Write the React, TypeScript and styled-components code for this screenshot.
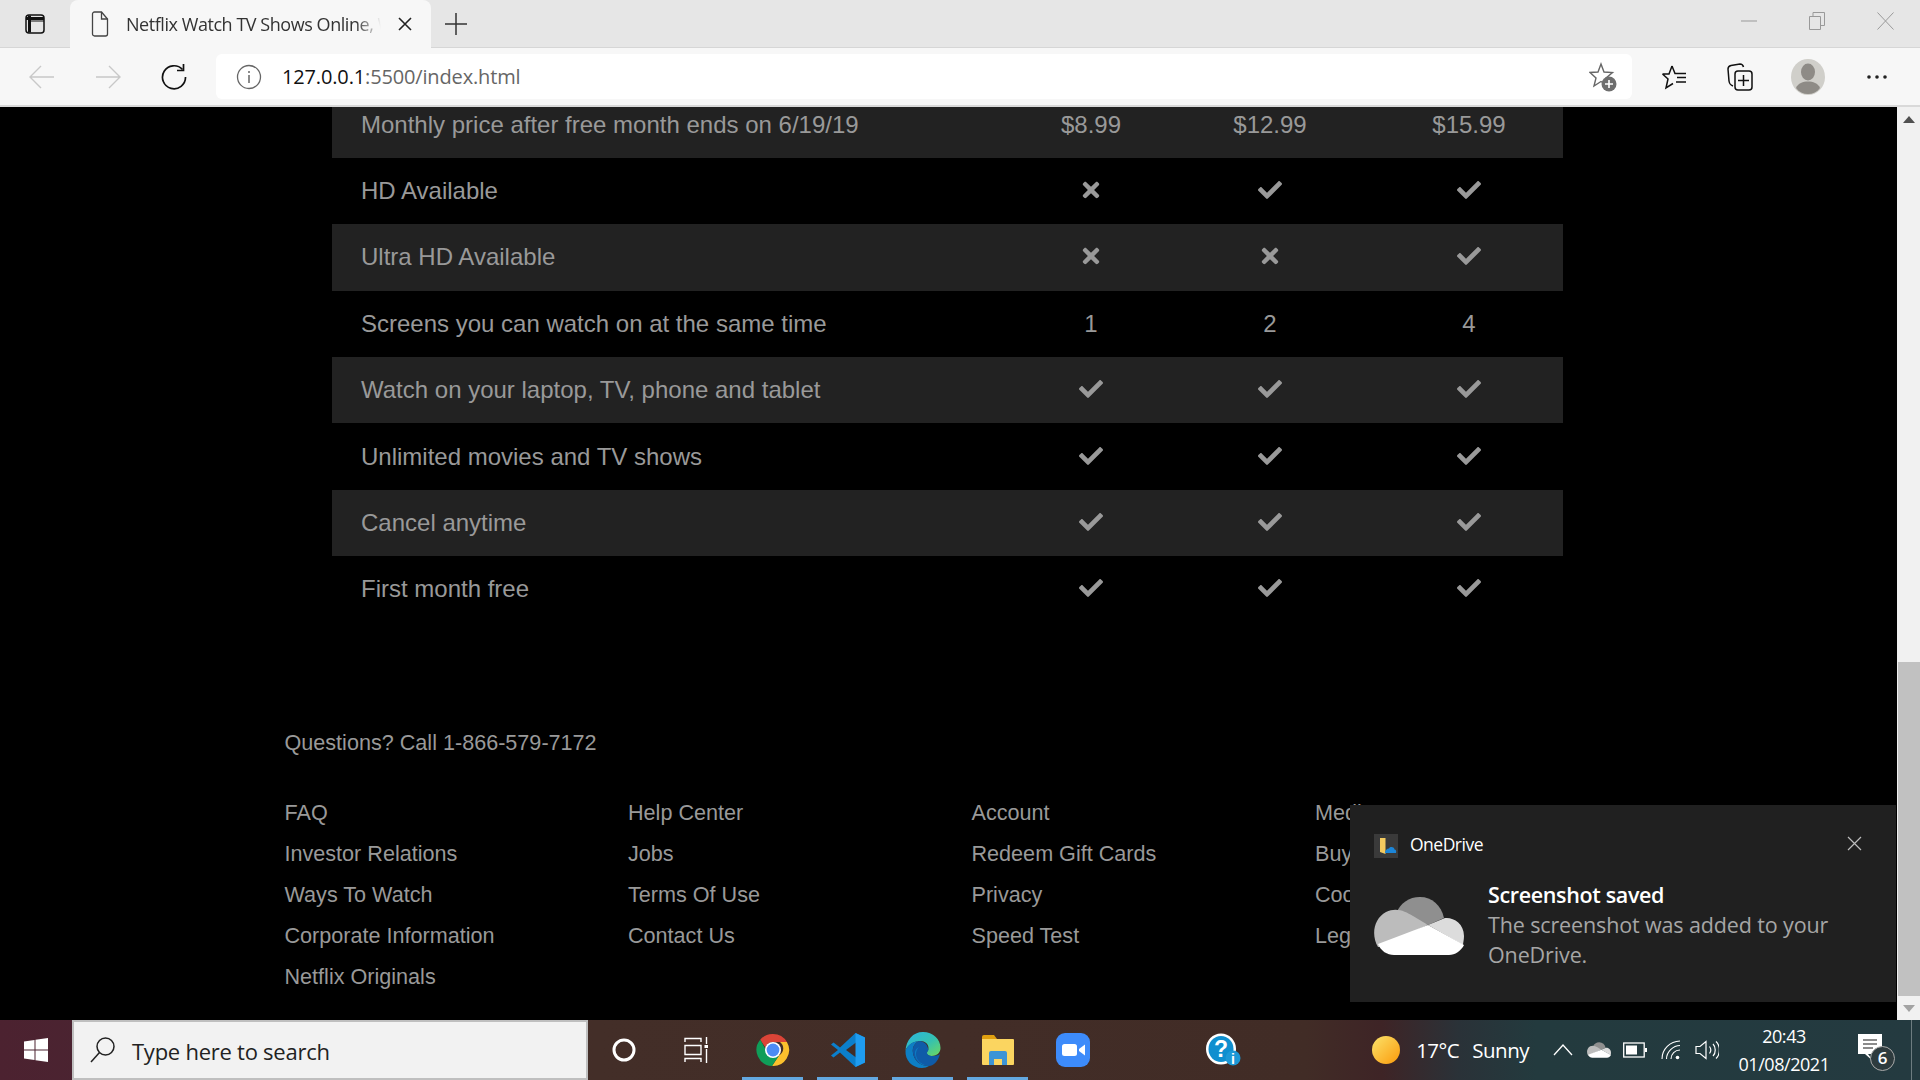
import styled, { createGlobalStyle } from "styled-components"
import { FaCheck, FaTimes } from "react-icons/fa"

const GlobalStyle = createGlobalStyle`
  html, body {
    margin: 0;
    padding: 0;
    height: 100%;
    overflow: hidden;
    background: #000;
  }
  * {
    box-sizing: border-box;
  }
`

const UI_FONT = `"Open Sans", "Noto Sans", sans-serif`

type Cell = string | boolean

const ROWS: { label: string; cells: Cell[] }[] = [
  { label: "Monthly price after free month ends on 6/19/19", cells: ["$8.99", "$12.99", "$15.99"] },
  { label: "HD Available", cells: [false, true, true] },
  { label: "Ultra HD Available", cells: [false, false, true] },
  { label: "Screens you can watch on at the same time", cells: ["1", "2", "4"] },
  { label: "Watch on your laptop, TV, phone and tablet", cells: [true, true, true] },
  { label: "Unlimited movies and TV shows", cells: [true, true, true] },
  { label: "Cancel anytime", cells: [true, true, true] },
  { label: "First month free", cells: [true, true, true] },
]

const FOOTER_COLUMNS = [
  ["FAQ", "Investor Relations", "Ways To Watch", "Corporate Information", "Netflix Originals"],
  ["Help Center", "Jobs", "Terms Of Use", "Contact Us"],
  ["Account", "Redeem Gift Cards", "Privacy", "Speed Test"],
  ["Media Center", "Buy Gift Cards", "Cookie Preferences", "Legal Notices"],
]

const ChromeIcon = () => (
  <svg width="34" height="34" viewBox="0 0 34 34">
    <path d="M17 1a16 16 0 0 1 13.900 8H17a8 8 0 0 0-7.600 5.500L4.200 6.800A16 16 0 0 1 17 1z" fill="#db4437" />
    <path d="M30.900 9A16 16 0 0 1 16 33l7-10.500a8 8 0 0 0 1-13.500z" fill="#fbc02d" />
    <path d="M4.200 6.800l6.600 11.400A8 8 0 0 0 23 22.500L16 33A16 16 0 0 1 4.200 6.800z" fill="#0f9d58" />
    <circle cx="17" cy="17" r="8" fill="#fff" />
    <circle cx="17" cy="17" r="6.400" fill="#4c8bf5" />
  </svg>
)

const VsCodeIcon = () => (
  <svg width="36" height="36" viewBox="0 0 36 36">
    <path d="M25.500 1L35 5.500v25L25.500 35 10 20.500 3.500 25.500 1 23.500 8 18 1 12.500l2.500-2 6.500 5z" fill="#0b7fcc" />
    <path d="M26 10.500L16 18l10 7.500z" fill="#412d28" />
    <path d="M25.500 1L35 5.500v25L25.500 35z" fill="#1f9cf0" />
  </svg>
)

const EdgeIcon = () => (
  <svg width="36" height="36" viewBox="0 0 36 36">
    <defs>
      <linearGradient id="edgeTop" x1="0" y1="0" x2="1" y2="1">
        <stop offset="0" stopColor="#2bb5e0" />
        <stop offset=".55" stopColor="#35c1b0" />
        <stop offset="1" stopColor="#6fd85e" />
      </linearGradient>
    </defs>
    <path d="M18 0c10 0 17.500 7 17.500 16 0 5-4 8-9 8-3 0-5-1.500-5-3 0-1 2-2 2-5 0-4-3.500-7-8-7C9 9 2 13 .5 19 1 8 8 0 18 0z" fill="url(#edgeTop)" />
    <path d="M.5 19C2 13 8 9 15 9c-5 1-8 6-7 12 1 7 7 13 16 13-2 1.300-4 2-7 2C7 36 0 28 .5 19z" fill="#0d7ec4" />
    <path d="M15 9c-5 1-8 6-7 12 1 7 7 13 16 13 4 0 9-4 11-12-2 1.500-5 2-8 2-3 0-5-1.500-5-3 0-1 1-2 1.500-3-1-5-3-8-8.500-9z" fill="#0f5ba8" />
    <path d="M14 15c-3 1.500-4 3.500-4 6 0 4 2 8 6 11 4 1.500 6 2 8 2-8-1-13-6-13-12 0-3 1-5 3-7z" fill="#0d7ec4" />
  </svg>
)

const ExplorerIcon = () => (
  <svg width="32" height="34" viewBox="0 0 32 34">
    <path d="M0 4a2 2 0 0 1 2-2h10l3 4H0z" fill="#e0a010" />
    <path d="M0 6h31a1 1 0 0 1 1 1v24a1 1 0 0 1-1 1H1a1 1 0 0 1-1-1z" fill="#fbd560" />
    <path d="M7 32V20a2 2 0 0 1 2-2h14a2 2 0 0 1 2 2v12h-5v-6h-8v6z" fill="#3d94d6" />
  </svg>
)

const ZoomIcon = () => (
  <svg width="34" height="34" viewBox="0 0 34 34">
    <rect width="34" height="34" rx="9" fill="#3d8bfa" />
    <rect x="6" y="11" width="15" height="12" rx="2.500" fill="#fff" />
    <path d="M23 16l6-4.500v11L23 18z" fill="#fff" />
  </svg>
)

const HelpIcon = () => (
  <svg width="36" height="34" viewBox="0 0 36 34">
    <ellipse cx="16" cy="16" rx="15" ry="15.500" fill="#fff" />
    <ellipse cx="16" cy="16" rx="12.500" ry="13" fill="#0f8fcf" />
    <text x="16" y="24" textAnchor="middle" fontFamily="Liberation Sans, sans-serif" fontWeight="700" fontSize="23" fill="#fff">
      ?
    </text>
    <circle cx="28" cy="25" r="7.500" fill="#1c98d6" />
    <text x="28" y="31" textAnchor="middle" fontFamily="Liberation Sans, sans-serif" fontWeight="700" fontSize="14" fill="#fff">
      i
    </text>
  </svg>
)

const OneDriveCloud = ({ width, height }: { width: number; height: number }) => (
  <svg width={width} height={height} viewBox="0 0 90 58">
    <path d="M22 17C26 6 35 0 46 0c12 0 21 8 24 21L54 28 22 17z" fill="#8f8f8f" />
    <path d="M4 50C-3 38-.5 22 12 15c10-5 19-1 27 4l15 9L5 50z" fill="#bcbcbc" />
    <path d="M54 28L71 21c8-1 19 5 19 18 0 4-1 7-1 9z" fill="#dcdcdc" />
    <path d="M4 47l50-19 36 20c-3 6-9 10-15 10H20C13 58 7 54 4 47z" fill="#fff" />
  </svg>
)

const App = () => (
  <>
    <GlobalStyle />
    <Screen>
      <TabStrip>
        <SidebarButton>
          <svg width="20" height="20" viewBox="0 0 20 20" fill="none" stroke="#111" strokeWidth="1.500">
            <rect x="1" y="1" width="18" height="18" rx="3" />
            <path d="M1 4.500h18M4.500 1.500v17" strokeWidth="3" />
            <path d="M6 7h13" stroke="#111" strokeWidth="1" />
          </svg>
        </SidebarButton>
        <Tab>
          <svg width="18" height="26" viewBox="0 0 18 26" fill="none" stroke="#444" strokeWidth="1.300">
            <path d="M1.500 3a2 2 0 0 1 2-2h7l6 7v15a2 2 0 0 1-2 2h-11a2 2 0 0 1-2-2z" />
            <path d="M10.500 1v7h6" />
          </svg>
          <TabTitle>Netflix Watch TV Shows Online, Watch</TabTitle>
          <svg width="14" height="14" viewBox="0 0 14 14" stroke="#222" strokeWidth="1.600">
            <path d="M1 1l12 12M13 1L1 13" />
          </svg>
        </Tab>
        <NewTab>
          <svg width="22" height="22" viewBox="0 0 22 22" stroke="#333" strokeWidth="1.500">
            <path d="M11 0v22M0 11h22" />
          </svg>
        </NewTab>
        <WindowControls>
          <WindowButton>
            <svg width="16" height="2" viewBox="0 0 16 2" stroke="#999">
              <path d="M0 1h16" />
            </svg>
          </WindowButton>
          <WindowButton>
            <svg width="16" height="18" viewBox="0 0 16 18" fill="none" stroke="#999">
              <path d="M.5 4.500h11v13H.5zM4 4.500V.5h11.500v13h-4" />
            </svg>
          </WindowButton>
          <WindowButton>
            <svg width="17" height="18" viewBox="0 0 17 18" stroke="#999">
              <path d="M.5.500l16 17M16.500.500l-16 17" />
            </svg>
          </WindowButton>
        </WindowControls>
      </TabStrip>

      <Toolbar>
        <NavButton>
          <svg width="26" height="24" viewBox="0 0 26 24" fill="none" stroke="#c8c8c8" strokeWidth="1.400">
            <path d="M25 12H1M12 1L1 12l11 11" />
          </svg>
        </NavButton>
        <NavButton>
          <svg width="26" height="24" viewBox="0 0 26 24" fill="none" stroke="#c8c8c8" strokeWidth="1.400">
            <path d="M1 12h24M14 1l11 11-11 11" />
          </svg>
        </NavButton>
        <NavButton>
          <svg width="26" height="26" viewBox="0 0 26 26" fill="none" stroke="#111" strokeWidth="1.700">
            <path d="M21.500 5.500A11.500 11.500 0 1 0 24.500 13" />
            <path d="M22.500 0v6.500H16" />
          </svg>
        </NavButton>
        <AddressBar>
          <svg width="26" height="26" viewBox="0 0 26 26" fill="none" stroke="#666" strokeWidth="1.300">
            <circle cx="13" cy="13" r="11.500" />
            <path d="M13 11v8M13 7v2" strokeWidth="1.500" />
          </svg>
          <Url>
            <UrlHost>127.0.0.1</UrlHost>:5500/index.html
          </Url>
          <AddFavorite>
            <svg width="28" height="30" viewBox="0 0 28 30">
              <path d="M12 2l3 8 8.500.5-6.500 5.500 2 8-7-4.500L5 24l2-8L1 10.500 9 10z" fill="none" stroke="#666" strokeWidth="1.400" />
              <circle cx="20" cy="22" r="7.500" fill="#6e6e6e" />
              <path d="M20 18v8M16 22h8" stroke="#fff" strokeWidth="1.600" />
            </svg>
          </AddFavorite>
        </AddressBar>
        <ToolIcons>
          <ToolIcon $width={66}>
            <svg width="26" height="26" viewBox="0 0 26 26" fill="none" stroke="#111" strokeWidth="1.500">
              <path d="M11 2l3 7.500h4M1.500 10H8l3-8M1.500 10l5.500 5-2 9 7-4.500M16 13.500h9M15 18h10M18 9.500h7" />
            </svg>
          </ToolIcon>
          <ToolIcon $width={66}>
            <svg width="26" height="28" viewBox="0 0 26 28" fill="none" stroke="#111" strokeWidth="1.500">
              <path d="M6 23C3 22 2.500 21 2 18L1 6c0-2 1-3 3-3.500L13 1c2 0 3 1 3.500 3" />
              <rect x="8" y="8" width="17" height="19" rx="3" />
              <path d="M16.500 12v11M11 17.500h11" />
            </svg>
          </ToolIcon>
          <ToolIcon $width={70}>
            <Avatar>
              <svg width="34" height="36" viewBox="0 0 34 36">
                <ellipse cx="17" cy="18" rx="17" ry="18" fill="#d0cfca" />
                <ellipse cx="17" cy="13" rx="7" ry="8.500" fill="#8e8b86" />
                <path d="M5 29c2-5 7-6.500 12-6.500S27 24 29 29c-3 4-7 6-12 6s-9-2-12-6z" fill="#8e8b86" />
              </svg>
            </Avatar>
          </ToolIcon>
          <ToolIcon $width={68}>
            <svg width="20" height="4" viewBox="0 0 20 4" fill="#222">
              <circle cx="2" cy="2" r="1.800" />
              <circle cx="10" cy="2" r="1.800" />
              <circle cx="18" cy="2" r="1.800" />
            </svg>
          </ToolIcon>
        </ToolIcons>
      </Toolbar>

      <Viewport>
        <Page>
          <PageInner>
            <Table>
              {ROWS.map((row, index) => (
                <Row key={row.label} $striped={index % 2 === 0}>
                  <LabelCell>{row.label}</LabelCell>
                  {row.cells.map((cell, cellIndex) => (
                    <ValueCell key={cellIndex}>
                      {typeof cell === "string" ? cell : cell ? <FaCheck size={24} /> : <FaTimes size={24} />}
                    </ValueCell>
                  ))}
                </Row>
              ))}
            </Table>
            <Footer>
              <Questions>Questions? Call 1-866-579-7172</Questions>
              <FooterGrid>
                {FOOTER_COLUMNS.map((column) => (
                  <FooterColumn key={column[0]}>
                    {column.map((link) => (
                      <FooterLink key={link}>{link}</FooterLink>
                    ))}
                  </FooterColumn>
                ))}
              </FooterGrid>
            </Footer>
          </PageInner>
        </Page>
        <Scrollbar>
          <ScrollArrow>
            <svg width="12" height="7" viewBox="0 0 12 7" fill="#505050">
              <path d="M6 0l6 7H0z" />
            </svg>
          </ScrollArrow>
          <ScrollTrack>
            <ScrollThumb />
          </ScrollTrack>
          <ScrollArrow>
            <svg width="12" height="7" viewBox="0 0 12 7" fill="#a3a3a3">
              <path d="M0 0h12L6 7z" />
            </svg>
          </ScrollArrow>
        </Scrollbar>
        <Toast>
          <ToastHeader>
            <ToastAppIcon>
              <svg width="24" height="24" viewBox="0 0 24 24">
                <rect width="24" height="24" fill="#3a3a3a" />
                <path d="M6 4h5.500v16L6 18z" fill="#f3ca5f" />
                <path d="M11 19c0-3 2-4.500 4-4.500 1-2 5-2 5.500 1 1.500 0 2 1.500 1.500 3.500z" fill="#1c86d8" />
              </svg>
            </ToastAppIcon>
            <ToastApp>OneDrive</ToastApp>
            <ToastClose>
              <svg width="15" height="15" viewBox="0 0 15 15" stroke="#bdbdbd" strokeWidth="1.200">
                <path d="M1 1l13 13M14 1L1 14" />
              </svg>
            </ToastClose>
          </ToastHeader>
          <ToastBody>
            <OneDriveCloud width={90} height={58} />
            <ToastText>
              <ToastTitle>Screenshot saved</ToastTitle>
              <ToastMessage>The screenshot was added to your OneDrive.</ToastMessage>
            </ToastText>
          </ToastBody>
        </Toast>
      </Viewport>

      <Taskbar>
        <StartButton>
          <svg width="24" height="24" viewBox="0 0 24 24" fill="#fff">
            <path d="M0 3.500l10.500-1.500v9.500H0zM11.500 1.800L24 0v11.500H11.500zM0 12.500h10.500V22L0 20.500zM11.500 12.500H24V24l-12.500-1.800z" />
          </svg>
        </StartButton>
        <SearchBox>
          <svg width="26" height="28" viewBox="0 0 26 28" fill="none" stroke="#222" strokeWidth="1.500">
            <circle cx="15.500" cy="10.500" r="8.500" />
            <path d="M9.500 16.500L1 26" />
          </svg>
          <SearchText>Type here to search</SearchText>
        </SearchBox>
        <SystemButton>
          <svg width="24" height="24" viewBox="0 0 24 24" fill="none" stroke="#fff" strokeWidth="3">
            <circle cx="12" cy="12" r="10" />
          </svg>
        </SystemButton>
        <SystemButton>
          <svg width="24" height="26" viewBox="0 0 24 26" fill="none" stroke="#fff" strokeWidth="1.400">
            <path d="M1 5V1.500h16V5M1 8.500h16v9H1zM1 25v-3.500h16V25M22.500 0v7M22.500 12v14" />
            <rect x="20.500" y="8" width="4" height="3" fill="#fff" stroke="none" />
          </svg>
        </SystemButton>
        <AppGroup>
          <AppButton $running>
            <ChromeIcon />
          </AppButton>
          <AppButton $running>
            <VsCodeIcon />
          </AppButton>
          <AppButton $running>
            <EdgeIcon />
          </AppButton>
          <AppButton $running>
            <ExplorerIcon />
          </AppButton>
          <AppButton>
            <ZoomIcon />
          </AppButton>
          <AppButton />
          <AppButton>
            <HelpIcon />
          </AppButton>
        </AppGroup>
        <Tray>
          <Weather>
            <Sun />
            <WeatherText>17°C</WeatherText>
            <WeatherText>Sunny</WeatherText>
          </Weather>
          <TrayIcons>
            <TrayIcon>
              <svg width="20" height="12" viewBox="0 0 20 12" fill="none" stroke="#fff" strokeWidth="1.300">
                <path d="M1 11l9-10 9 10" />
              </svg>
            </TrayIcon>
            <TrayIcon>
              <OneDriveCloud width={24} height={16} />
            </TrayIcon>
            <TrayIcon>
              <svg width="24" height="16" viewBox="0 0 24 16" fill="none" stroke="#fff" strokeWidth="1.300">
                <rect x=".7" y="1" width="20.500" height="14" />
                <rect x="3" y="3.500" width="11" height="9" fill="#fff" stroke="none" />
                <rect x="22" y="6" width="2" height="4" fill="#fff" stroke="none" />
              </svg>
            </TrayIcon>
            <TrayIcon>
              <svg width="20" height="20" viewBox="0 0 20 20" fill="none" stroke="#fff" strokeWidth="1.100">
                <path d="M1 19C1 9 9 1.500 19 1M5.500 19C5.500 12 12 5.500 19 5.500M10 19c0-5 4-9 9-9" />
                <circle cx="16.500" cy="17.500" r="1.800" fill="#fff" stroke="none" />
              </svg>
            </TrayIcon>
            <TrayIcon>
              <svg width="24" height="20" viewBox="0 0 24 20" fill="none" stroke="#fff" strokeWidth="1.200">
                <path d="M1 6.500h4L11 1.500v17l-6-5H1zM14.500 6.500c1.500 2 1.500 5 0 7M18 4c3 3 3 9 0 12M21 1.500c4.500 4 4.500 13 0 17" />
              </svg>
            </TrayIcon>
          </TrayIcons>
          <Clock>
            <span>20:43</span>
            <span>01/08/2021</span>
          </Clock>
          <ActionCenter>
            <svg width="24" height="28" viewBox="0 0 24 28" fill="#fff">
              <path d="M0 0h24v20H10l6 8-9-8H0z" />
              <path d="M5 6h14M5 10h14M5 14h10" stroke="#666" strokeWidth="1.300" />
            </svg>
            <ActionBadge>6</ActionBadge>
          </ActionCenter>
          <ShowDesktop />
        </Tray>
      </Taskbar>
    </Screen>
  </>
)

export default App

const Screen = styled.div`
  display: flex;
  flex-direction: column;
  width: 1920px;
  height: 1080px;
  overflow: hidden;
`

const TabStrip = styled.div`
  display: flex;
  align-items: flex-end;
  flex: 0 0 48px;
  background: #e6e6e6;
  border-bottom: 1px solid #d6d6d6;
`

const SidebarButton = styled.div`
  display: flex;
  align-items: center;
  justify-content: center;
  width: 70px;
  height: 47px;
`

const Tab = styled.div`
  display: flex;
  align-items: center;
  gap: 17px;
  width: 361px;
  height: 48px;
  margin-bottom: -1px;
  padding: 0 19px 0 21px;
  background: #f7f7f7;
  border-radius: 8px 8px 0 0;
  font: 18px ${UI_FONT};
  color: #333;
`

const TabTitle = styled.div`
  flex: 1;
  overflow: hidden;
  white-space: nowrap;
  letter-spacing: -0.45px;
  -webkit-mask-image: linear-gradient(90deg, #000 90%, transparent 100%);
  mask-image: linear-gradient(90deg, #000 90%, transparent 100%);
`

const NewTab = styled.div`
  display: flex;
  align-items: center;
  justify-content: center;
  width: 50px;
  height: 47px;
`

const WindowControls = styled.div`
  display: flex;
  margin-left: auto;
  padding-right: 1px;
  height: 42px;
  align-self: flex-start;
`

const WindowButton = styled.div`
  display: flex;
  align-items: center;
  justify-content: center;
  width: 68px;
`

const Toolbar = styled.div`
  display: flex;
  align-items: center;
  flex: 0 0 59px;
  padding-left: 9px;
  background: #f7f7f7;
  border-bottom: 2px solid #d9d9d9;
`

const NavButton = styled.div`
  display: flex;
  align-items: center;
  justify-content: center;
  width: 66px;
  height: 45px;
`

const AddressBar = styled.div`
  display: flex;
  align-items: center;
  width: 1416px;
  height: 45px;
  margin-left: 9px;
  padding: 0 15px 0 20px;
  background: #fff;
  border-radius: 6px;
`

const Url = styled.div`
  margin-left: 20px;
  font: 20px ${UI_FONT};
  letter-spacing: -0.15px;
  color: #666;
`

const UrlHost = styled.span`
  color: #111;
`

const AddFavorite = styled.div`
  display: flex;
  margin-left: auto;
`

const ToolIcons = styled.div`
  display: flex;
  align-items: center;
  margin-left: 9px;
`

const ToolIcon = styled.div<{ $width: number }>`
  display: flex;
  align-items: center;
  justify-content: center;
  width: ${(props) => props.$width}px;
`

const Avatar = styled.div`
  display: flex;
`

const Viewport = styled.div`
  position: relative;
  display: flex;
  flex: 1;
  min-height: 0;
  background: #000;
`

const Page = styled.div`
  flex: 1;
  overflow: hidden;
`

const PageInner = styled.div`
  margin-top: -15.5px;
  font-family: "Liberation Sans", Arial, sans-serif;
  color: #999;
`

const Table = styled.div`
  width: 1231px;
  margin-left: 332px;
`

const Row = styled.div<{ $striped: boolean }>`
  display: grid;
  grid-template-columns: 685px 148px 210px 188px;
  align-items: center;
  height: 66.4px;
  background: ${(props) => (props.$striped ? "#222" : "transparent")};
  font-size: 24px;
`

const LabelCell = styled.div`
  padding-left: 29px;
`

const ValueCell = styled.div`
  display: flex;
  justify-content: center;

  svg {
    margin-top: -2px;
  }
`

const Footer = styled.div`
  padding: 107.5px 0 0 284.5px;
`

const Questions = styled.div`
  font-size: 21.6px;
  line-height: 26px;
`

const FooterGrid = styled.div`
  display: grid;
  grid-template-columns: repeat(4, 343.500px);
  margin-top: 36px;
`

const FooterColumn = styled.div`
  display: flex;
  flex-direction: column;
`

const FooterLink = styled.div`
  height: 41px;
  font-size: 21.6px;
  line-height: 41px;
  white-space: nowrap;
`

const Scrollbar = styled.div`
  display: flex;
  flex-direction: column;
  flex: 0 0 23px;
  background: #f1f1f1;
`

const ScrollArrow = styled.div`
  display: flex;
  align-items: center;
  justify-content: center;
  flex: 0 0 24px;
`

const ScrollTrack = styled.div`
  display: flex;
  flex-direction: column;
  justify-content: flex-end;
  flex: 1;
`

const ScrollThumb = styled.div`
  height: 334px;
  margin-left: 1px;
  background: #c1c1c1;
`

const Toast = styled.div`
  position: absolute;
  top: 698px;
  left: 1350px;
  width: 546px;
  height: 197px;
  padding: 29px 24px 0;
  background: #202020;
  font-family: ${UI_FONT};
`

const ToastHeader = styled.div`
  display: flex;
  align-items: center;
  height: 24px;
`

const ToastAppIcon = styled.div`
  display: flex;
`

const ToastApp = styled.div`
  margin: 0 0 4px 12px;
  font-size: 17.500px;
  line-height: 20px;
  letter-spacing: -0.5px;
  color: #fff;
`

const ToastClose = styled.div`
  display: flex;
  margin: -5px 10px 0 auto;
`

const ToastBody = styled.div`
  display: flex;
  align-items: flex-start;
  gap: 24px;
  margin-top: 39px;
`

const ToastText = styled.div`
  display: flex;
  flex-direction: column;
  margin-top: -17px;
`

const ToastTitle = styled.div`
  font-size: 21.5px;
  font-weight: 600;
  line-height: 30px;
  letter-spacing: -0.35px;
  color: #fff;
`

const ToastMessage = styled.div`
  width: 380px;
  font-size: 21.5px;
  line-height: 30px;
  letter-spacing: -0.13px;
  color: #a6a6a6;
`

const Taskbar = styled.div`
  display: flex;
  align-items: stretch;
  flex: 0 0 60px;
  background: linear-gradient(
    90deg,
    #4c2230 0%,
    #4a2431 6%,
    #432e28 31%,
    #412c26 68%,
    #3e2426 72%,
    #2a3238 76%,
    #233a3e 80%,
    #243a40 100%
  );
`

const StartButton = styled.div`
  display: flex;
  align-items: center;
  justify-content: center;
  flex: 0 0 72px;
`

const SearchBox = styled.div`
  display: flex;
  align-items: center;
  gap: 16px;
  flex: 0 0 516px;
  padding-left: 16px;
  background: #f2f2f2;
  border: 2px solid #bfbfbf;
`

const SearchText = styled.div`
  padding-top: 1px;
  font: 22px ${UI_FONT};
  letter-spacing: -0.25px;
  color: #222;
`

const SystemButton = styled.div`
  display: flex;
  align-items: center;
  justify-content: center;
  flex: 0 0 72px;
`

const AppGroup = styled.div`
  display: flex;
  padding-left: 3px;
`

const AppButton = styled.div<{ $running?: boolean }>`
  position: relative;
  display: flex;
  align-items: center;
  justify-content: center;
  width: 61px;
  margin: 0 7px;

  &::after {
    content: "";
    position: absolute;
    left: 0;
    right: 0;
    bottom: 0;
    height: 3px;
    background: ${(props) => (props.$running ? "#63a8e0" : "transparent")};
  }
`

const Tray = styled.div`
  display: flex;
  align-items: center;
  margin-left: auto;
  color: #fff;
  font-family: ${UI_FONT};
`

const Weather = styled.div`
  display: flex;
  align-items: center;
  gap: 13px;
  margin-right: 16px;
`

const Sun = styled.div`
  width: 28px;
  height: 28px;
  margin-right: 3px;
  border-radius: 50%;
  background: linear-gradient(135deg, #fbe36b, #fb9a0a);
`

const WeatherText = styled.div`
  font-size: 20.5px;
  letter-spacing: -0.5px;
`

const TrayIcons = styled.div`
  display: flex;
  align-items: center;
`

const TrayIcon = styled.div`
  display: flex;
  align-items: center;
  justify-content: center;
  width: 36px;
`

const Clock = styled.div`
  display: flex;
  flex-direction: column;
  align-items: center;
  width: 112px;
  margin-left: 3px;
  font-size: 18px;
  line-height: 28px;
  letter-spacing: -0.45px;
`

const ActionCenter = styled.div`
  position: relative;
  display: flex;
  justify-content: center;
  width: 56px;
  margin: -4px 13px 0 2px;
`

const ActionBadge = styled.div`
  position: absolute;
  top: 12px;
  left: 28px;
  width: 25px;
  height: 25px;
  border: 1.500px solid #aaa;
  border-radius: 50%;
  background: #2e3b3e;
  font-size: 17px;
  font-weight: 600;
  line-height: 22px;
  text-align: center;
`

const ShowDesktop = styled.div`
  align-self: stretch;
  width: 9px;
  height: 60px;
  border-left: 1px solid #6d7c80;
`
